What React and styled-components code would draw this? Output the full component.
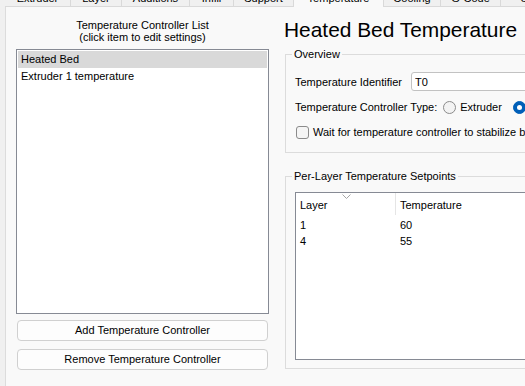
import React from "react";
import styled, { createGlobalStyle } from "styled-components";

const GlobalStyle = createGlobalStyle`
  html, body {
    margin: 0;
    padding: 0;
    background: #f0f0f0;
    overflow: hidden;
  }
  body {
    font-family: "Liberation Sans", Arial, sans-serif;
    font-size: 11px;
    color: #000;
  }
  * {
    box-sizing: border-box;
  }
`;

const Window = styled.div`
  width: 525px;
  height: 386px;
  display: flex;
  flex-direction: column;
  overflow: hidden;
`;

const TabStrip = styled.div`
  display: flex;
  height: 7px;
  padding-left: 5px;
  flex-shrink: 0;
  overflow: hidden;
  white-space: nowrap;
`;

const Tab = styled.div`
  flex: 0 0 ${props => props.$w}px;
  height: 17px;
  margin-top: -10px;
  line-height: 16px;
  text-align: center;
  background: ${props => (props.$active ? "#f9f9f9" : "#f0f0f0")};
  border-right: 1px solid #d9d9d9;
  border-bottom: ${props => (props.$active ? "none" : "1px solid #d9d9d9")};
`;

const Pane = styled.div`
  flex: 1;
  display: flex;
  gap: 16px;
  margin-left: 5px;
  padding: 12px 0 0 10px;
  background: #f9f9f9;
  border-left: 1px solid #dcdcdc;
  overflow: hidden;
`;

const LeftColumn = styled.div`
  width: 253px;
  flex-shrink: 0;
  display: flex;
  flex-direction: column;
`;

const ListTitle = styled.div`
  text-align: center;
  line-height: 12px;
`;

const ControllerList = styled.div`
  margin-top: 6px;
  height: 265px;
  border: 1px solid #868a94;
  background: #fff;
  padding: 1px;
`;

const ListItem = styled.div`
  height: 17px;
  line-height: 17px;
  padding-left: 3px;
  background: ${props => (props.$selected ? "#d9d9d9" : "transparent")};
`;

const Button = styled.button`
  margin: ${props => props.$top}px 1px 0;
  height: 21px;
  padding: 0;
  font-family: inherit;
  font-size: 11px;
  line-height: 19px;
  color: #000;
  background: #fdfdfd;
  border: 1px solid #d0d0d0;
  border-radius: 4px;
`;

const RightColumn = styled.div`
  width: 340px;
  flex-shrink: 0;
  display: flex;
  flex-direction: column;
`;

const Title = styled.h1`
  margin: -1px 0 0 -1px;
  font-size: 20.9px;
  line-height: 24px;
  font-weight: normal;
  white-space: nowrap;
`;

const GroupBox = styled.fieldset`
  margin: ${props => props.$top}px 0 0;
  padding: ${props => props.$pad};
  border: 1px solid #dcdcdc;
  min-width: 0;
`;

const Legend = styled.legend`
  margin-left: -3px;
  padding: 0 2px;
  line-height: 13px;
  font-size: 11px;
`;

const FieldRow = styled.div`
  display: flex;
  align-items: center;
  height: ${props => props.$h}px;
  margin-top: ${props => props.$top || 0}px;
  white-space: nowrap;
`;

const FieldLabel = styled.span`
  flex: 0 0 ${props => (props.$w ? `${props.$w}px` : "auto")};
  margin-right: ${props => props.$gap || 0}px;
`;

const TextInput = styled.input`
  width: 200px;
  height: 19px;
  padding: 0 3px;
  font-family: inherit;
  font-size: 11px;
  color: #000;
  background: #fff;
  border: 1px solid #c2c2c2;
  border-radius: 3px;
  outline: none;
`;

const Radio = styled.span`
  flex-shrink: 0;
  display: inline-flex;
  align-items: center;
  justify-content: center;
  width: 13px;
  height: 13px;
  border-radius: 50%;
  border: 1px solid ${props => (props.$checked ? "#005fb8" : "#8b8b8b")};
  background: ${props => (props.$checked ? "#005fb8" : "#f3f3f3")};
  &::after {
    content: "";
    display: ${props => (props.$checked ? "block" : "none")};
    width: 5px;
    height: 5px;
    border-radius: 50%;
    background: #fff;
  }
`;

const OptionLabel = styled.span`
  margin: 0 11px 0 4px;
`;

const CheckBox = styled.span`
  flex-shrink: 0;
  width: 13px;
  height: 13px;
  margin-left: 1px;
  border: 1px solid #8b8b8b;
  border-radius: 3px;
  background: #f5f5f5;
`;

const CheckText = styled.span`
  margin-left: 4px;
`;

const ListView = styled.div`
  height: 168px;
  border: 1px solid #868a94;
  background: #fff;
`;

const HeaderRow = styled.div`
  display: flex;
  height: 24px;
`;

const HeaderCell = styled.div`
  position: relative;
  flex: 0 0 ${props => (props.$w ? `${props.$w}px` : "auto")};
  height: 22px;
  line-height: 24px;
  padding-left: 4px;
  border-right: ${props => (props.$divider ? "1px solid #e5e5e5" : "none")};
`;

const SortArrow = styled.svg`
  position: absolute;
  top: 1px;
  left: 46px;
`;

const DataRow = styled.div`
  display: flex;
  height: 16px;
  line-height: 16px;
`;

const DataCell = styled.div`
  flex: 0 0 ${props => (props.$w ? `${props.$w}px` : "auto")};
  padding-left: 4px;
`;

const tabs = [
  ["Extruder", 66],
  ["Layer", 51],
  ["Additions", 68],
  ["Infill", 44],
  ["Support", 60],
  ["Temperature", 90],
  ["Cooling", 57],
  ["G-Code", 60],
  ["Settings", 80],
];

const setpoints = [
  { layer: 1, temp: 60 },
  { layer: 4, temp: 55 },
];

const App = () => (
  <>
    <GlobalStyle />
    <Window>
      <TabStrip>
        {tabs.map(([name, w]) => (
          <Tab key={name} $w={w} $active={name === "Temperature"}>
            {name}
          </Tab>
        ))}
      </TabStrip>
      <Pane>
        <LeftColumn>
          <ListTitle>
            Temperature Controller List
            <br />
            (click item to edit settings)
          </ListTitle>
          <ControllerList>
            <ListItem $selected>Heated Bed</ListItem>
            <ListItem>Extruder 1 temperature</ListItem>
          </ControllerList>
          <Button $top={6}>Add Temperature Controller</Button>
          <Button $top={8}>Remove Temperature Controller</Button>
        </LeftColumn>
        <RightColumn>
          <Title>Heated Bed Temperature</Title>
          <GroupBox $top={6} $pad="11px 0 13px 9px">
            <Legend>Overview</Legend>
            <FieldRow $h={19}>
              <FieldLabel $w={116}>Temperature Identifier</FieldLabel>
              <TextInput defaultValue="T0" />
            </FieldRow>
            <FieldRow $h={14} $top={9}>
              <FieldLabel $gap={6}>Temperature Controller Type:</FieldLabel>
              <Radio />
              <OptionLabel>Extruder</OptionLabel>
              <Radio $checked />
              <OptionLabel>Heated Bed</OptionLabel>
            </FieldRow>
            <FieldRow $h={14} $top={11}>
              <CheckBox />
              <CheckText>
                Wait for temperature controller to stabilize before continuing
              </CheckText>
            </FieldRow>
          </GroupBox>
          <GroupBox $top={17} $pad="9px 0 8px 9px">
            <Legend>Per-Layer Temperature Setpoints</Legend>
            <ListView>
              <HeaderRow>
                <HeaderCell $w={100} $divider>
                  Layer
                  <SortArrow width="9" height="5" viewBox="0 0 9 5">
                    <path d="M0.5 0.5 L4.5 4.5 L8.5 0.5" fill="none" stroke="#a6a6a6" strokeWidth="1" />
                  </SortArrow>
                </HeaderCell>
                <HeaderCell>Temperature</HeaderCell>
              </HeaderRow>
              {setpoints.map(row => (
                <DataRow key={row.layer}>
                  <DataCell $w={100}>{row.layer}</DataCell>
                  <DataCell>{row.temp}</DataCell>
                </DataRow>
              ))}
            </ListView>
          </GroupBox>
        </RightColumn>
      </Pane>
    </Window>
  </>
);

export default App;
